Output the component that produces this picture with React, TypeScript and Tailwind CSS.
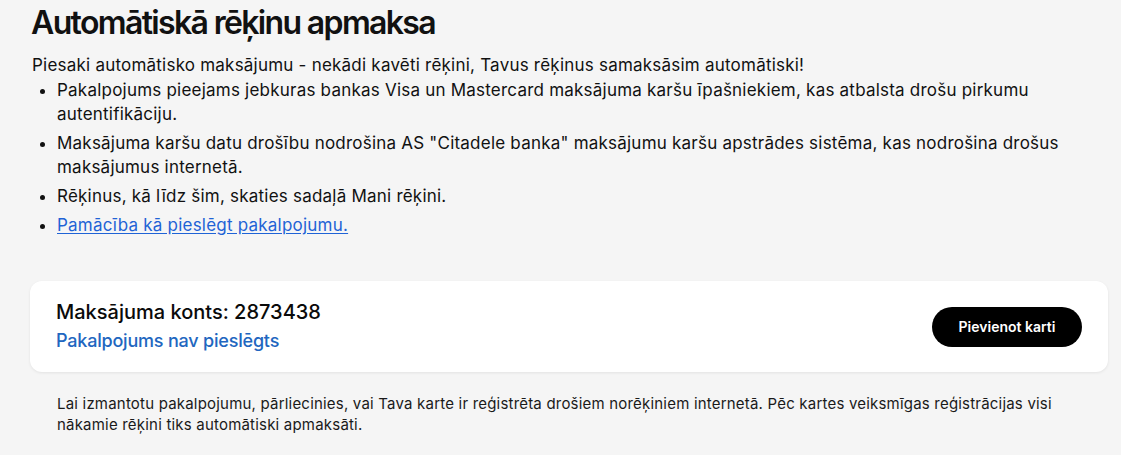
export default function App() {
  return (
    <div className="min-h-[455px] bg-[#f5f5f5] font-['Inter','Noto_Sans',sans-serif] text-[#111111]">
      <div className="w-[1078px] pl-[30px] box-content pt-[3px]">
        <h1 className="text-[32px] leading-10 font-semibold tracking-[-1.65px] pl-[1px]">
          Automātiskā rēķinu apmaksa
        </h1>
        <div className="mt-[10px] pl-[2px] text-[17px] leading-6 tracking-[0.22px]">
          <p>Piesaki automātisko maksājumu - nekādi kavēti rēķini, Tavus rēķinus samaksāsim automātiski!</p>
          <ul className="list-disc pl-[25px] mt-[1px] space-y-[5px]">
            <li>
              Pakalpojums pieejams jebkuras bankas Visa un Mastercard maksājuma karšu īpašniekiem, kas atbalsta drošu pirkumu
              autentifikāciju.
            </li>
            <li>
              Maksājuma karšu datu drošību nodrošina AS "Citadele banka" maksājumu karšu apstrādes sistēma, kas nodrošina drošus
              maksājumus internetā.
            </li>
            <li>Rēķinus, kā līdz šim, skaties sadaļā Mani rēķini.</li>
            <li>
              <a href="#" className="text-[#1f63d6] underline underline-offset-2">
                Pamācība kā pieslēgt pakalpojumu.
              </a>
            </li>
          </ul>
        </div>

        <div className="mt-[44px] bg-white rounded-xl shadow-[0_1px_3px_rgba(0,0,0,0.08)] flex items-center justify-between pl-[26px] pr-[26px] h-[91px]">
          <div>
            <div className="text-xl leading-7 font-medium text-[#0a0a0a]">Maksājuma konts: 2873438</div>
            <div className="text-lg leading-7 font-medium tracking-[-0.2px] text-[#2166c0] mt-[1px]">Pakalpojums nav pieslēgts</div>
          </div>
          <button className="h-10 w-[150px] rounded-full bg-black text-white text-sm font-semibold">
            Pievienot karti
          </button>
        </div>

        <p className="mt-[21px] px-[27px] text-[15px] leading-[21px] tracking-[0.2px] text-[#1a1a1a]">
          Lai izmantotu pakalpojumu, pārliecinies, vai Tava karte ir reģistrēta drošiem norēķiniem internetā. Pēc kartes veiksmīgas reģistrācijas visi
          nākamie rēķini tiks automātiski apmaksāti.
        </p>
      </div>
    </div>
  );
}
